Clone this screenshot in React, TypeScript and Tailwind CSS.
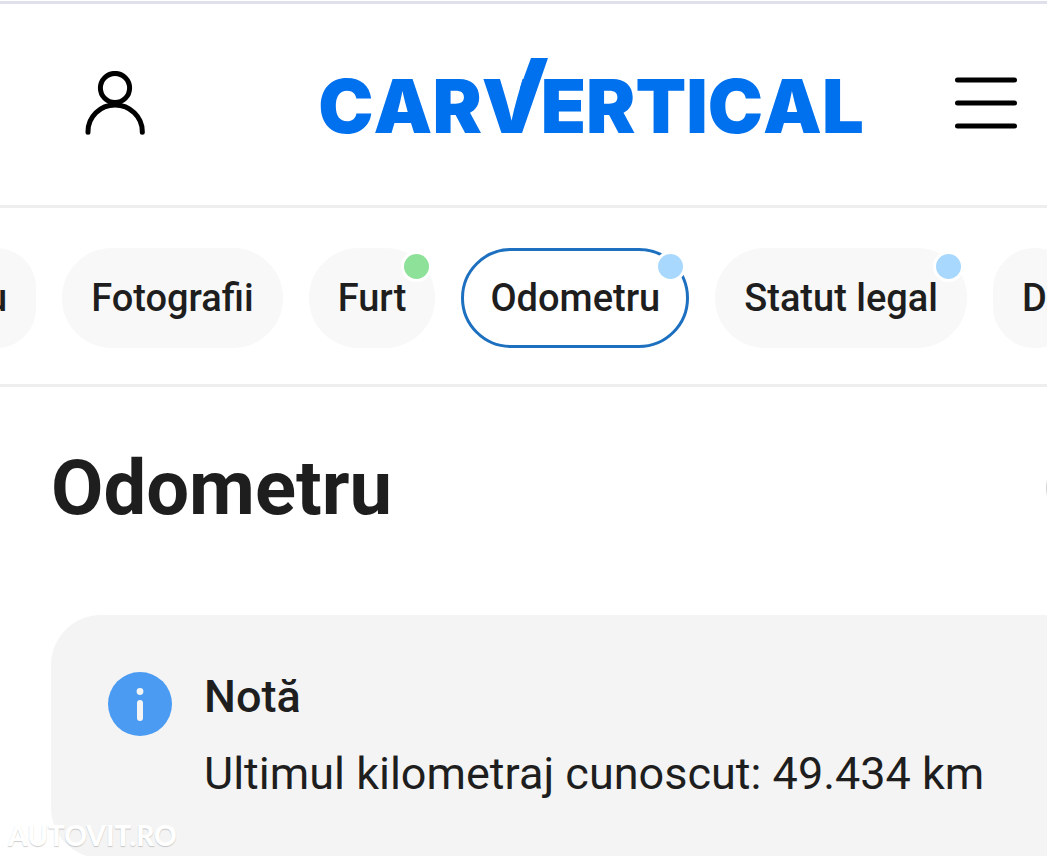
import { useState } from "react";
import clsx from "clsx";

const sections = [
  { id: "prev", label: "u" },
  { id: "photos", label: "Fotografii" },
  { id: "theft", label: "Furt", dot: "bg-[#8de199]" },
  { id: "odometer", label: "Odometru", dot: "bg-[#a8d8fd]" },
  { id: "legal", label: "Statut legal", dot: "bg-[#a8d8fd]" },
  { id: "damage", label: "D" },
];

function UserIcon() {
  return (
    <svg width="60" height="64" viewBox="0 0 60 64" fill="none" stroke="#000" strokeWidth="5" strokeLinecap="round">
      <circle cx="30" cy="17" r="14.6" />
      <path d="M3 61.3v-.8c0-14.6 12-26.5 27-26.5s27.3 11.9 27.3 26.5v.8" />
    </svg>
  );
}

function MenuIcon() {
  return (
    <svg width="62" height="52" viewBox="0 0 62 52" stroke="#000" strokeWidth="5" strokeLinecap="round">
      <path d="M2.5 3h57M2.5 26h57M2.5 49h57" />
    </svg>
  );
}

function InfoIcon() {
  return (
    <svg width="64" height="64" viewBox="0 0 64 64" className="shrink-0">
      <circle cx="32" cy="32" r="32" fill="#4b9bf2" />
      <circle cx="32" cy="19.5" r="3.4" fill="#f4f4f4" />
      <path d="M32 31v15" stroke="#f4f4f4" strokeWidth="6" strokeLinecap="round" />
    </svg>
  );
}

function Logo() {
  return (
    <a href="#" aria-label="carVertical" className="pt-1.5 font-[Inter,sans-serif] text-[74px] leading-[80px] font-black text-[#0071ee] [font-kerning:none]">
      CAR
      <span className="relative">
        V
        {/* tick stroke rising from the V */}
        <svg width="38" height="75" viewBox="0 0 38 75" className="absolute bottom-[18px] left-1/2">
          <path d="M20 0h17L11 75H9V30z" fill="#0071ee" />
        </svg>
      </span>
      ERTICAL
    </a>
  );
}

export default function App() {
  const [active, setActive] = useState("odometer");

  return (
    <div className="relative h-screen overflow-hidden bg-white pt-px font-[Roboto,sans-serif] text-[#1e1e1e]">
      <header className="flex h-[207px] items-center border-t-3 border-b-3 border-t-[#e0e0ec] border-b-[#eeeeee] pr-[30px] pb-1 pl-[85px]">
        <button aria-label="Cont" className="mr-[82px]">
          <UserIcon />
        </button>
        <div className="flex flex-1 justify-center">
          <Logo />
        </div>
        <button aria-label="Meniu">
          <MenuIcon />
        </button>
      </header>

      <nav className="flex gap-[26px] overflow-hidden border-b-3 border-[#eeeeee] pt-10 pb-9">
        {sections.map((s) => (
          <button
            key={s.id}
            onClick={() => setActive(s.id)}
            className={clsx(
              "relative h-[100px] shrink-0 rounded-full border-3 px-[26px] text-[38px] font-medium first:-ml-[43px]",
              active === s.id ? "border-[#1c70bf] bg-white" : "border-[#f8f8f8] bg-[#f8f8f8]"
            )}
          >
            {s.label}
            {s.dot && <span className={clsx("absolute top-[3px] right-[3px] size-[25px] rounded-full ring-3 ring-white", s.dot)} />}
          </button>
        ))}
      </nav>

      <main className="pl-[51px]">
        <div className="flex items-center justify-between pt-14">
          <h1 className="text-[76px] leading-[90px] font-bold">Odometru</h1>
          <button aria-label="Ajutor" className="-mr-[59px] size-[60px] shrink-0 rounded-full border-3 border-[#d4d4d4]" />
        </div>

        <section className="mt-[82px] flex gap-8 rounded-l-[50px] bg-[#f4f4f4] pt-[57px] pb-14 pl-[57px]">
          <InfoIcon />
          <div>
            <h2 className="text-[45px] leading-[50px] font-medium">Notă</h2>
            <p className="mt-6 text-[45px] leading-[56px] whitespace-nowrap">Ultimul kilometraj cunoscut: 49.434 km</p>
          </div>
        </section>
      </main>

      <div className="absolute bottom-1 left-2 font-[Lato,sans-serif] text-[28px] leading-[34px] font-black text-white [text-shadow:0_1px_1px_rgba(0,0,0,0.2)]">
        AUTOVIT.RO
      </div>
    </div>
  );
}
